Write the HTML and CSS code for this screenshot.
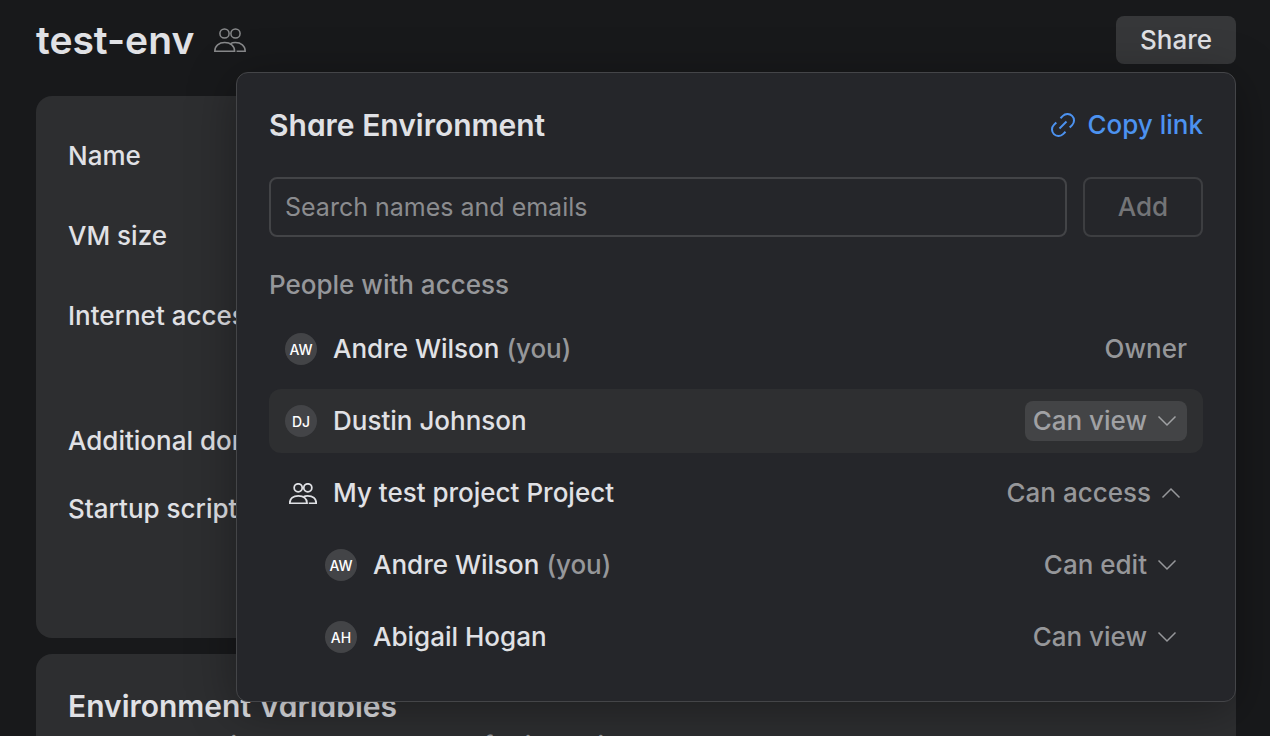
FILE: index.html
```html
<!DOCTYPE html>
<html lang="en">
<head>
    <meta charset="utf-8">
    <title>test-env</title>
    <link rel="stylesheet" href="styles.css">
</head>
<body>

<!-- shared icons -->
<svg class="sprite" aria-hidden="true">
    <symbol id="icon-people" viewBox="0 0 32 24">
        <circle cx="10.5" cy="5.5" r="4.6" />
        <circle cx="21.5" cy="5.5" r="4.6" />
        <path d="M.8 23.2C.8 17.8 5 14.600 10.700 14.600s9.900 3.200 9.900 8.600z" />
        <path d="M16.500 15.700c1.400-.8 3-1.100 4.800-1.100 5.700 0 9.900 3.200 9.900 8.600h-8.600" />
    </symbol>
    <symbol id="icon-link" viewBox="0 0 24 24">
        <path d="M9.500 5.300l2.400-2.400a6.100 6.100 0 0 1 9.200 9.200l-2.400 2.400" />
        <path d="M14.500 18.700l-2.400 2.400a6.100 6.100 0 0 1-9.200-9.200l2.400-2.400" />
        <path d="M8.500 15.500l7-7" />
    </symbol>
    <symbol id="icon-chevron" viewBox="0 0 20 12">
        <path d="M1.500 1.500L10 10l8.500-8.500" />
    </symbol>
</svg>

<div class="page">
    <header class="page-header">
        <h1>test-env</h1>
        <svg class="icon icon-title"><use href="#icon-people" /></svg>
        <button class="share-button" type="button" aria-expanded="true">Share</button>
    </header>

    <section class="popover" aria-labelledby="share-title">
        <div class="popover-header">
            <h2 id="share-title">Share Environment</h2>
            <a class="copy-link" href="#">
                <svg class="icon icon-link"><use href="#icon-link" /></svg>
                Copy link
            </a>
        </div>

        <form class="invite">
            <input type="text" placeholder="Search names and emails" aria-label="Search names and emails">
            <button type="button" disabled>Add</button>
        </form>

        <h3>People with access</h3>
        <ul class="people">
            <li class="person">
                <span class="avatar">AW</span>
                <span class="name">Andre Wilson <span class="you">(you)</span></span>
                <span class="role">Owner</span>
            </li>
            <li class="person active">
                <span class="avatar">DJ</span>
                <span class="name">Dustin Johnson</span>
                <span class="access">
                    <select aria-label="Access for Dustin Johnson">
                        <option>Can view</option>
                    </select>
                    <svg class="icon icon-chevron"><use href="#icon-chevron" /></svg>
                </span>
            </li>
            <li class="person">
                <svg class="icon icon-project"><use href="#icon-people" /></svg>
                <span class="name">My test project Project</span>
                <button class="expand" type="button" aria-expanded="true">
                    Can access
                    <svg class="icon icon-chevron up"><use href="#icon-chevron" /></svg>
                </button>
            </li>
            <li class="person member">
                <span class="avatar">AW</span>
                <span class="name">Andre Wilson <span class="you">(you)</span></span>
                <span class="access">
                    <select aria-label="Access for Andre Wilson">
                        <option>Can edit</option>
                    </select>
                    <svg class="icon icon-chevron"><use href="#icon-chevron" /></svg>
                </span>
            </li>
            <li class="person member">
                <span class="avatar">AH</span>
                <span class="name">Abigail Hogan</span>
                <span class="access">
                    <select aria-label="Access for Abigail Hogan">
                        <option>Can view</option>
                    </select>
                    <svg class="icon icon-chevron"><use href="#icon-chevron" /></svg>
                </span>
            </li>
        </ul>
    </section>

    <main>
        <section class="card settings">
            <div class="field">Name</div>
            <div class="field">VM size</div>
            <div class="field field-access">Internet access</div>
            <div class="field field-domains">Additional domains</div>
            <div class="field field-script">Startup script</div>
        </section>

        <section class="card variables">
            <h2>Environment Variables</h2>
            <p>Key-value pairs set on each run of this environment</p>
        </section>
    </main>
</div>

</body>
</html>
```

FILE: styles.css
```css
* {
    box-sizing: border-box;
}

body {
    margin: 0;
    height: 100vh;
    overflow: hidden;
    background: #18191b;
    color: #e0e1e5;
    font-family: Inter, "Liberation Sans", sans-serif;
    font-size: 26px;
    font-weight: 450;
    line-height: 32px;
    font-optical-sizing: none;
    -webkit-font-smoothing: antialiased;
}

h1, h2, h3, p, ul {
    margin: 0;
    padding: 0;
}

button, input, select {
    font: inherit;
    font-optical-sizing: none;
    color: inherit;
}

h2 {
    font-size: 30px;
    font-weight: 600;
    line-height: 36px;
    font-feature-settings: "cv11";
}

.sprite {
    display: none;
}

.icon {
    flex: none;
    fill: none;
    stroke: currentColor;
    stroke-width: 1.5;
}

.page {
    position: relative;
    padding: 16px 34px 0 36px;
}

.page-header {
    display: flex;
    align-items: center;
    gap: 20px;
    height: 48px;
    margin-bottom: 32px;
}

.page-header h1 {
    font-size: 39px;
    font-weight: 600;
    line-height: 48px;
}

.icon-title {
    width: 32px;
    height: 24px;
    color: #88898b;
}

.share-button {
    width: 120px;
    height: 48px;
    margin-left: auto;
    padding: 0;
    border: 0;
    border-radius: 8px;
    background: #363739;
}

/* settings behind the popover */
.card {
    border-radius: 16px;
    background: #2d2e30;
    padding: 20px 32px;
}

.field {
    min-height: 80px;
    padding: 24px 0;
}

.field-access {
    min-height: 125px;
}

.field-domains {
    min-height: 68px;
    padding-bottom: 0;
}

.field-script {
    min-height: 149px;
}

.variables {
    margin-top: 16px;
    padding-top: 34px;
}

.variables p {
    margin-top: 6px;
    color: #96979a;
}

/* share popover */
.popover {
    position: absolute;
    top: 72px;
    right: 34px;
    width: 1000px;
    max-width: calc(100% - 68px);
    padding: 32px;
    border: 1px solid #444548;
    border-radius: 12px;
    background: #25262a;
    box-shadow: 0 8px 48px rgba(0, 0, 0, 0.35);
}

.popover-header {
    display: flex;
    align-items: center;
    justify-content: space-between;
    height: 40px;
}

.copy-link {
    display: flex;
    align-items: center;
    gap: 12px;
    color: #4c92f0;
    text-decoration: none;
}

.icon-link {
    width: 24px;
    height: 24px;
    stroke-width: 2;
}

.invite {
    display: flex;
    gap: 16px;
    margin: 32px 0;
}

.invite input,
.invite button {
    height: 60px;
    border: 2px solid #434447;
    border-radius: 8px;
    background: transparent;
}

.invite input {
    flex: 1;
    min-width: 0;
    padding: 0 14px;
    font-size: 25px;
    font-weight: 400;
}

.invite input::placeholder {
    color: #8b8c8f;
    opacity: 1;
}

.invite button {
    width: 120px;
    padding: 0;
    border-color: #3d3e41;
    color: #737477;
}

h3 {
    font-size: 26px;
    font-weight: inherit;
    line-height: 32px;
    color: #96979a;
}

.people {
    display: flex;
    flex-direction: column;
    gap: 8px;
    margin-top: 16px;
    list-style: none;
}

.person {
    display: flex;
    align-items: center;
    gap: 16px;
    height: 64px;
    padding: 0 16px;
    border-radius: 12px;
}

.person.active {
    background: #2e2f31;
}

.person.member {
    padding-left: 56px;
}

.avatar {
    flex: none;
    width: 32px;
    height: 32px;
    border-radius: 50%;
    background: #434447;
    color: #fff;
    font-size: 14px;
    font-weight: 500;
    line-height: 34px;
    text-align: center;
}

.name {
    flex: 1;
}

.you, .role, .access, .expand {
    color: #96979a;
}

.icon-project {
    width: 28px;
    height: 21px;
    margin-left: 4px;
    stroke-width: 2;
}

.access, .expand {
    display: flex;
    align-items: center;
    gap: 10px;
    height: 40px;
    padding: 0 10px 0 8px;
    border: 0;
    border-radius: 8px;
    background: transparent;
}

.expand {
    padding-right: 6px;
}

.access select {
    appearance: none;
    field-sizing: content;
    padding: 0;
    border: 0;
    background: transparent;
}

.active .access {
    background: #434446;
    color: #a0a1a4;
}

.icon-chevron {
    width: 20px;
    height: 12px;
    stroke-width: 1.5;
}

.icon-chevron.up {
    transform: rotate(180deg);
}
```
